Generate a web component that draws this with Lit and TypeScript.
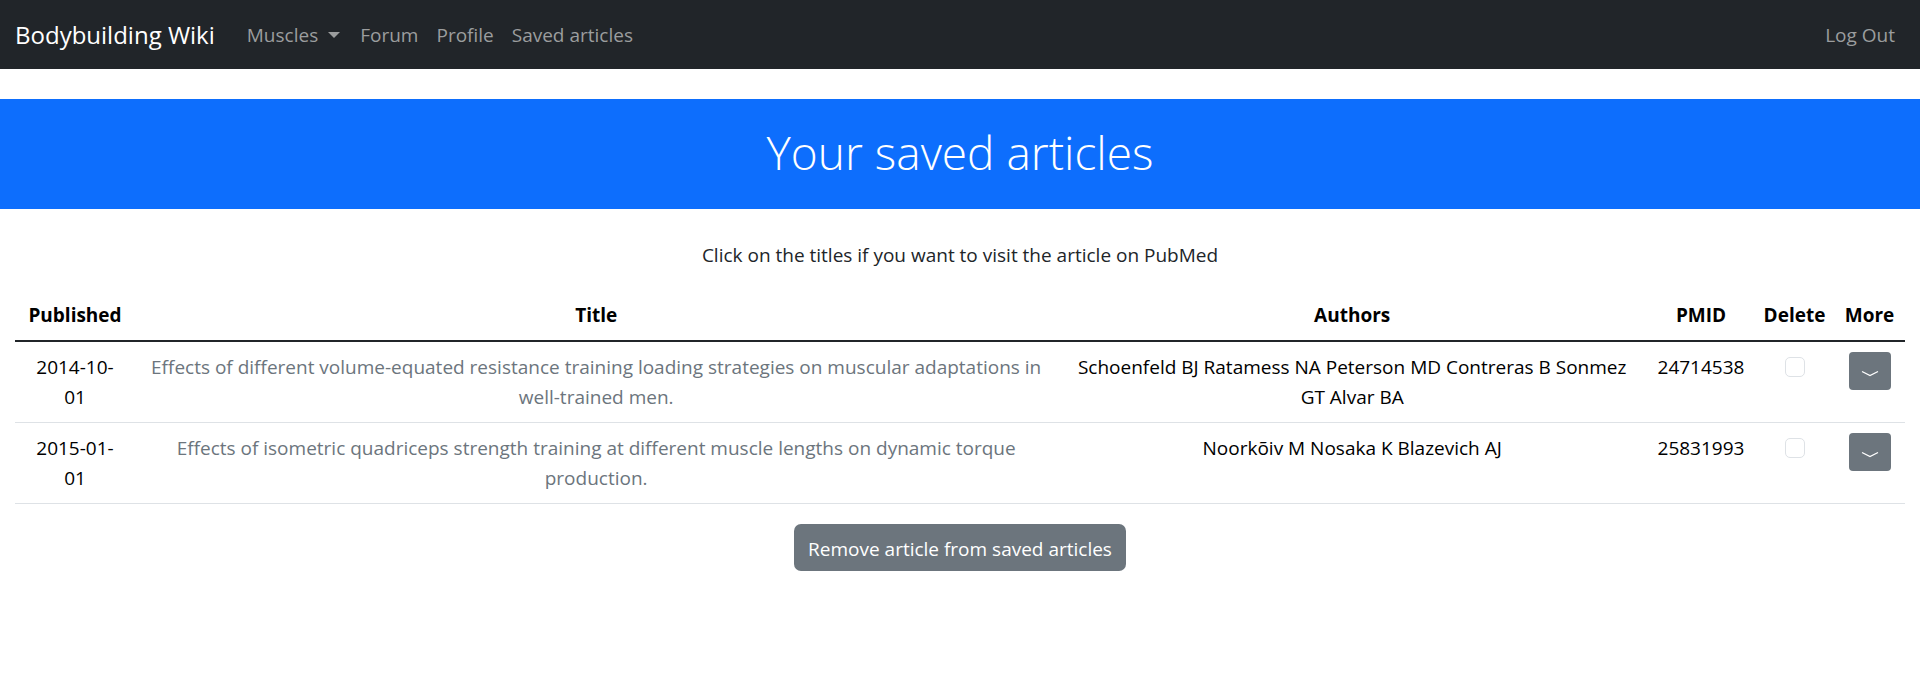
import { LitElement, html, css } from "lit";
import { customElement, state } from "lit/decorators.js";

interface Article {
  published: string;
  title: string;
  authors: string;
  pmid: string;
}

@customElement("app-root")
export class AppRoot extends LitElement {
  static styles = css`
    :host {
      display: block;
      font-family: "Segoe UI", "Open Sans", "Noto Sans", sans-serif;
      font-size: 19px;
      line-height: 30px;
      color: #212529;
      background: #fff;
    }
    * {
      box-sizing: border-box;
    }
    a {
      text-decoration: none;
    }
    .navbar {
      display: flex;
      align-items: center;
      height: 69px;
      padding: 0 16px 0 15px;
      background: #212529;
    }
    .brand {
      margin-right: 23px;
      font-size: 24px;
      color: #fff;
    }
    .links {
      display: flex;
      flex: 1;
      margin: 0;
      padding: 0;
      list-style: none;
    }
    .links .end {
      margin-left: auto;
    }
    .link {
      display: flex;
      align-items: center;
      padding: 10px 9px;
      color: #9b9d9e;
    }
    .caret {
      width: 12px;
      height: 6px;
      margin: 0 2px 0 10px;
    }
    .hero {
      margin: 30px 0 31px;
      padding: 23px 15px 27px;
      background: #0d6efd;
      color: #fff;
      text-align: center;
    }
    h1 {
      margin: 0;
      font-size: 46px;
      line-height: 60px;
      font-weight: 300;
    }
    .content {
      padding: 0 15px;
      text-align: center;
    }
    .hint {
      margin: 0 0 20px;
    }
    table {
      width: 100%;
      margin-bottom: 20px;
      border-collapse: collapse;
      table-layout: fixed;
      color: #000;
    }
    th,
    td {
      padding: 10px;
      vertical-align: top;
      border-bottom: 1px solid #dee2e6;
    }
    thead th {
      border-bottom: 2px solid #212529;
      font-weight: 700;
    }
    th.tight {
      padding: 10px 4px;
    }
    td.date {
      padding: 10px 12px;
    }
    .c-date {
      width: 120px;
    }
    .c-authors {
      width: 31.2%;
    }
    .c-pmid {
      width: 108px;
    }
    .c-delete {
      width: 79px;
    }
    .c-more {
      width: 71px;
    }
    .title {
      color: #6c757d;
    }
    .check {
      appearance: none;
      display: block;
      width: 20px;
      height: 20px;
      margin: 5px auto 0;
      border: 1px solid #dee2e6;
      border-radius: 5px;
      background: #fff;
    }
    .check:checked {
      background: #0d6efd;
      border-color: #0d6efd;
    }
    button {
      border: 0;
      background: #6c757d;
      color: #fff;
      font: inherit;
      cursor: pointer;
    }
    .more {
      display: flex;
      justify-content: center;
      align-items: center;
      width: 42px;
      height: 38px;
      margin: 0 auto;
      padding: 6px 0 0;
      border-radius: 4px;
    }
    .more svg {
      width: 18px;
      height: 8px;
    }
    .remove {
      padding: 10px 14px 7px;
      border-radius: 7px;
    }
  `;

  @state() private articles: Article[] = [
    {
      published: "2014-10-01",
      title:
        "Effects of different volume-equated resistance training loading strategies on muscular adaptations in well-trained men.",
      authors:
        "Schoenfeld BJ Ratamess NA Peterson MD Contreras B Sonmez GT Alvar BA",
      pmid: "24714538",
    },
    {
      published: "2015-01-01",
      title:
        "Effects of isometric quadriceps strength training at different muscle lengths on dynamic torque production.",
      authors: "Noorkõiv M Nosaka K Blazevich AJ",
      pmid: "25831993",
    },
  ];

  private row(a: Article) {
    return html`<tr>
      <td class="date">${a.published}</td>
      <td><a class="title" href="#${a.pmid}">${a.title}</a></td>
      <td>${a.authors}</td>
      <td>${a.pmid}</td>
      <td>
        <input class="check" type="checkbox" aria-labelledby="delete-heading" />
      </td>
      <td>
        <button class="more" type="button" aria-labelledby="more-heading">
          <svg viewBox="0 0 18 8" fill="none" stroke="#fff" stroke-width="1.3" aria-hidden="true">
            <path d="M1 1.5 L9 5.5 L17 1.5" />
          </svg>
        </button>
      </td>
    </tr>`;
  }

  render() {
    return html`
      <nav class="navbar">
        <a class="brand" href="#">Bodybuilding Wiki</a>
        <ul class="links">
          <li>
            <a class="link" href="#muscles"
              >Muscles<svg class="caret" viewBox="0 0 12 6" aria-hidden="true">
                <path d="M0 0H12L6 6Z" fill="currentColor" /></svg
            ></a>
          </li>
          <li><a class="link" href="#forum">Forum</a></li>
          <li><a class="link" href="#profile">Profile</a></li>
          <li><a class="link" href="#saved">Saved articles</a></li>
          <li class="end"><a class="link" href="#logout">Log Out</a></li>
        </ul>
      </nav>
      <header class="hero"><h1>Your saved articles</h1></header>
      <main class="content">
        <p class="hint">
          Click on the titles if you want to visit the article on PubMed
        </p>
        <table>
          <colgroup>
            <col class="c-date" />
            <col />
            <col class="c-authors" />
            <col class="c-pmid" />
            <col class="c-delete" />
            <col class="c-more" />
          </colgroup>
          <thead>
            <tr>
              <th>Published</th>
              <th>Title</th>
              <th>Authors</th>
              <th>PMID</th>
              <th class="tight" id="delete-heading">Delete</th>
              <th class="tight" id="more-heading">More</th>
            </tr>
          </thead>
          <tbody>
            ${this.articles.map((a) => this.row(a))}
          </tbody>
        </table>
        <button class="remove" type="button">
          Remove article from saved articles
        </button>
      </main>
    `;
  }
}
